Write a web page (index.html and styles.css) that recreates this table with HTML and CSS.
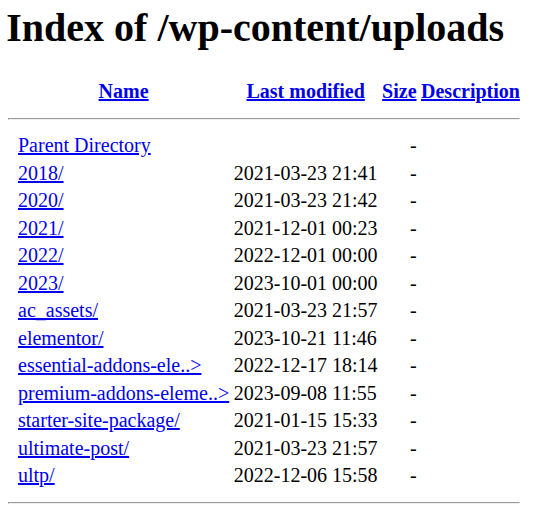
FILE: index.html
```html
<!DOCTYPE html>
<html>
<head>
<meta charset="utf-8">
<title>Index of /wp-content/uploads</title>
<link rel="stylesheet" href="styles.css">
</head>
<body class="page">
<h1 class="title">Index of /wp-content/uploads</h1>
<table class="listing">
<tr><th class="ico"></th><th><a href="#">Name</a></th><th><a href="#">Last modified</a></th><th><a href="#">Size</a></th><th><a href="#">Description</a></th></tr>
<tr><th colspan="5"><hr class="rule"></th></tr>
<tr><td class="ico"></td><td><a href="#">Parent Directory</a></td><td>&nbsp;</td><td class="size">  - </td><td>&nbsp;</td></tr>
<tr><td class="ico"></td><td><a href="#">2018/</a></td><td class="date">2021-03-23 21:41  </td><td class="size">  - </td><td>&nbsp;</td></tr>
<tr><td class="ico"></td><td><a href="#">2020/</a></td><td class="date">2021-03-23 21:42  </td><td class="size">  - </td><td>&nbsp;</td></tr>
<tr><td class="ico"></td><td><a href="#">2021/</a></td><td class="date">2021-12-01 00:23  </td><td class="size">  - </td><td>&nbsp;</td></tr>
<tr><td class="ico"></td><td><a href="#">2022/</a></td><td class="date">2022-12-01 00:00  </td><td class="size">  - </td><td>&nbsp;</td></tr>
<tr><td class="ico"></td><td><a href="#">2023/</a></td><td class="date">2023-10-01 00:00  </td><td class="size">  - </td><td>&nbsp;</td></tr>
<tr><td class="ico"></td><td><a href="#">ac_assets/</a></td><td class="date">2021-03-23 21:57  </td><td class="size">  - </td><td>&nbsp;</td></tr>
<tr><td class="ico"></td><td><a href="#">elementor/</a></td><td class="date">2023-10-21 11:46  </td><td class="size">  - </td><td>&nbsp;</td></tr>
<tr><td class="ico"></td><td><a href="#">essential-addons-ele..&gt;</a></td><td class="date">2022-12-17 18:14  </td><td class="size">  - </td><td>&nbsp;</td></tr>
<tr><td class="ico"></td><td><a href="#">premium-addons-eleme..&gt;</a></td><td class="date">2023-09-08 11:55  </td><td class="size">  - </td><td>&nbsp;</td></tr>
<tr><td class="ico"></td><td><a href="#">starter-site-package/</a></td><td class="date">2021-01-15 15:33  </td><td class="size">  - </td><td>&nbsp;</td></tr>
<tr><td class="ico"></td><td><a href="#">ultimate-post/</a></td><td class="date">2021-03-23 21:57  </td><td class="size">  - </td><td>&nbsp;</td></tr>
<tr><td class="ico"></td><td><a href="#">ultp/</a></td><td class="date">2022-12-06 15:58  </td><td class="size">  - </td><td>&nbsp;</td></tr>
<tr><th colspan="5"><hr class="rule"></th></tr>
</table>
</body>
</html>
```
FILE: styles.css
```css
html {
  zoom: 1.25;
  background: #fff;
}
.page {
  margin: 0 4px 8px 4px;
  font-family: "Liberation Serif", "Times New Roman", serif;
  font-size: 16px;
  color: #000;
}
.title {
  font-size: 2em;
  margin: 3px 0 21px 1px;
  font-weight: bold;
}
.listing a {
  color: #0000ee;
}
.ico {
  padding: 0;
  width: 6.2px;
}
.size {
  text-align: right;
}
.date {
  text-align: left;
}
.rule {
  margin: 0.5em 0;
}
```
